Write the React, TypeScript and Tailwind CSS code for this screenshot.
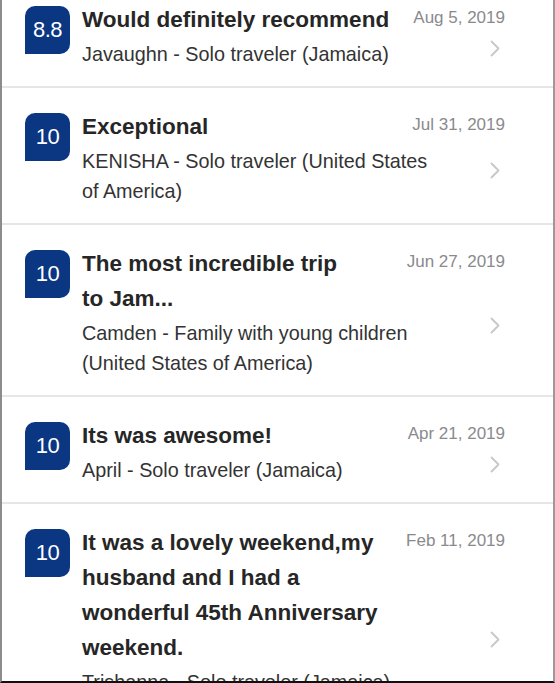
interface Review {
    score: string;
    title: string[];
    date: string;
    guest: string[];
}

const reviews: Review[] = [
    {
        score: "8.8",
        title: ["Would definitely recommend"],
        date: "Aug 5, 2019",
        guest: ["Javaughn - Solo traveler (Jamaica)"]
    },
    {
        score: "10",
        title: ["Exceptional"],
        date: "Jul 31, 2019",
        guest: ["KENISHA - Solo traveler (United States", "of America)"]
    },
    {
        score: "10",
        title: ["The most incredible trip", "to Jam..."],
        date: "Jun 27, 2019",
        guest: ["Camden - Family with young children", "(United States of America)"]
    },
    {
        score: "10",
        title: ["Its was awesome!"],
        date: "Apr 21, 2019",
        guest: ["April - Solo traveler (Jamaica)"]
    },
    {
        score: "10",
        title: ["It was a lovely weekend,my", "husband and I had a", "wonderful 45th Anniversary", "weekend."],
        date: "Feb 11, 2019",
        guest: ["Trishanna - Solo traveler (Jamaica)", "\u00a0"]
    }
];

function Chevron() {
    return (
        <svg width="10" height="17" viewBox="0 0 10 17" fill="none">
            <path d="M1.5 1.5 L8.5 8.5 L1.5 15.5" stroke="#c7c7cc" strokeWidth="1.8" strokeLinecap="round" strokeLinejoin="round" />
        </svg>
    );
}

function ReviewRow({ review }: { review: Review }) {
    return (
        <div className="grid grid-cols-[57px_1fr_15px] grid-rows-[auto_1fr] pl-[23px] pr-[48px] pt-[21px] pb-[17px] border-b-2 border-[#e6e6e8]">
            <div className="row-span-2 self-start mt-[4px] w-[45px] h-[48px] bg-[#0b3682] rounded-tl-[10px] rounded-tr-[10px] rounded-br-[10px] flex items-center justify-center text-white text-[22px] leading-none tracking-[-0.5px]">
                {review.score}
            </div>

            <div className="col-span-2 col-start-2 row-start-1 flex justify-between items-start gap-2">
                <div className="font-bold text-[22.5px] leading-[35px] text-[#262626] whitespace-nowrap">
                    {review.title.map((line, i) => (
                        <div key={i}>{line}</div>
                    ))}
                </div>
                <div className="mt-[4px] text-[17px] leading-[24px] text-[#8a8a8e] whitespace-nowrap">{review.date}</div>
            </div>

            <div className="col-start-2 row-start-2 mt-[2px] text-[19.8px] leading-[30px] text-[#333333] whitespace-nowrap">
                {review.guest.map((line, i) => (
                    <div key={i}>{line}</div>
                ))}
            </div>

            <div className="col-start-3 row-start-1 row-span-2 self-center mt-[26px] justify-self-start flex">
                <Chevron />
            </div>
        </div>
    );
}

export default function App() {
    return (
        <div
            className="w-[555px] h-[683px] overflow-hidden bg-white border-l-2 border-r-2 border-b-2 border-l-[#8c8c8c] border-r-[#9a9a9a] border-b-[#111111]"
            style={{ fontFamily: '"Liberation Sans", Arial, sans-serif' }}
        >
            <div className="-mt-[19px]">
                {reviews.map((r, i) => (
                    <ReviewRow key={i} review={r} />
                ))}
            </div>
        </div>
    );
}
